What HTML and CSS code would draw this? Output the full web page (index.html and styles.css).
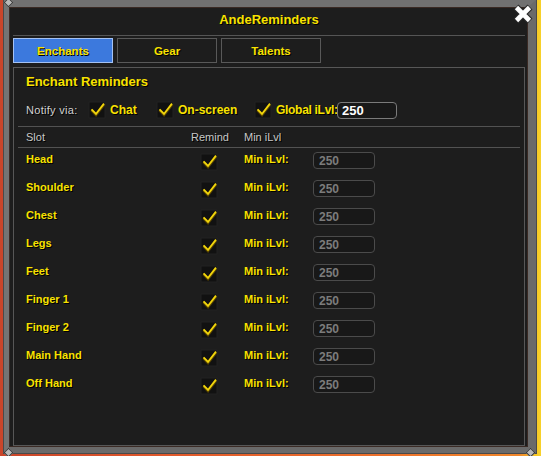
FILE: index.html
```html
<!DOCTYPE html>
<html lang="en">
<head>
    <meta charset="UTF-8" />
    <meta name="viewport" content="width=device-width, initial-scale=1.0"/>
    <title>AndeReminders</title>
    <link rel="stylesheet" href="styles.css">
</head>
<body>
    <svg class="defs" width="0" height="0" aria-hidden="true">
        <symbol id="check" viewBox="0 0 18 18">
            <rect x="1" y="1" width="16" height="16" fill="#111111" stroke="#222222"/>
            <path d="M3.5 9 L8 13.8 L16 3.4" fill="none" stroke="#5a4600" stroke-width="3"/>
            <path d="M3.5 8.4 L8 13 L16 2.6" fill="none" stroke="#f2d60c" stroke-width="1.8"/>
        </symbol>
    </svg>

    <div class="frame">
        <span class="rivet rivet-tl"></span>
        <span class="rivet rivet-bl"></span>
        <span class="rivet rivet-br"></span>

        <div class="title">AndeReminders</div>
        <button class="close" title="Close">
            <svg viewBox="0 0 22 22" width="22" height="22">
                <path d="M4 4 L18 18 M18 4 L4 18" stroke="#2b2b2b" stroke-width="7"/>
                <path d="M4.5 4.5 L17.5 17.5 M17.5 4.5 L4.5 17.5" stroke="#ffffff" stroke-width="4.6"/>
            </svg>
        </button>

        <div class="tabs">
            <button class="tab active">Enchants</button>
            <button class="tab">Gear</button>
            <button class="tab">Talents</button>
        </div>

        <div class="panel">
            <h2>Enchant Reminders</h2>

            <div class="notify">
                <span class="notify-label">Notify via:</span>
                <label class="opt opt-chat"><svg class="cb"><use href="#check"/></svg>Chat</label>
                <label class="opt opt-screen"><svg class="cb"><use href="#check"/></svg>On-screen</label>
                <label class="opt opt-global"><svg class="cb"><use href="#check"/></svg>Global iLvl:</label>
                <input class="ilvl global" type="text" value="250">
            </div>

            <div class="sep"></div>
            <div class="row head">
                <span>Slot</span>
                <span class="mid">Remind</span>
                <span>Min iLvl</span>
            </div>
            <div class="sep"></div>

            <div class="row"><span class="lbl">Head</span><svg class="cb"><use href="#check"/></svg><span class="lbl">Min iLvl:</span><input class="ilvl" type="text" value="250" disabled></div>
            <div class="row"><span class="lbl">Shoulder</span><svg class="cb"><use href="#check"/></svg><span class="lbl">Min iLvl:</span><input class="ilvl" type="text" value="250" disabled></div>
            <div class="row"><span class="lbl">Chest</span><svg class="cb"><use href="#check"/></svg><span class="lbl">Min iLvl:</span><input class="ilvl" type="text" value="250" disabled></div>
            <div class="row"><span class="lbl">Legs</span><svg class="cb"><use href="#check"/></svg><span class="lbl">Min iLvl:</span><input class="ilvl" type="text" value="250" disabled></div>
            <div class="row"><span class="lbl">Feet</span><svg class="cb"><use href="#check"/></svg><span class="lbl">Min iLvl:</span><input class="ilvl" type="text" value="250" disabled></div>
            <div class="row"><span class="lbl">Finger 1</span><svg class="cb"><use href="#check"/></svg><span class="lbl">Min iLvl:</span><input class="ilvl" type="text" value="250" disabled></div>
            <div class="row"><span class="lbl">Finger 2</span><svg class="cb"><use href="#check"/></svg><span class="lbl">Min iLvl:</span><input class="ilvl" type="text" value="250" disabled></div>
            <div class="row"><span class="lbl">Main Hand</span><svg class="cb"><use href="#check"/></svg><span class="lbl">Min iLvl:</span><input class="ilvl" type="text" value="250" disabled></div>
            <div class="row"><span class="lbl">Off Hand</span><svg class="cb"><use href="#check"/></svg><span class="lbl">Min iLvl:</span><input class="ilvl" type="text" value="250" disabled></div>
        </div>
    </div>
</body>
</html>
```

FILE: styles.css
```css
body {
    margin: 0;
    padding: 0;
    width: 541px;
    height: 456px;
    overflow: hidden;
    font-family: "Liberation Sans", Arial, sans-serif;
    background: linear-gradient(to right, #c9452a 0%, #e0582b 30%, #ec702b 70%, #f0862a 96%, #f6c626 99%, #f8d22a 100%);
}

.defs {
    position: absolute;
}

.frame {
    position: relative;
    box-sizing: border-box;
    width: 532px;
    height: 453px;
    margin-left: 4px;
    display: flex;
    flex-direction: column;
    background-color: #1d1d1d;
    border-style: solid;
    border-color: #717171 #6a6a6a #6a6a6a #747474;
    border-width: 7px 8px 6px 5px;
    box-shadow: inset 0 0 0 1px #3a2a24, 0 0 0 1px #4a4a4a;
}

.rivet {
    position: absolute;
    width: 5px;
    height: 5px;
    background: #b9b9b9;
    border: 1px solid #3a3a3a;
    transform: rotate(45deg);
}

.rivet-tl { left: -4px; top: -8px; }
.rivet-bl { left: -4px; bottom: -9px; }
.rivet-br { right: -6px; bottom: -9px; }

.title {
    height: 24px;
    padding: 1px 0 3px;
    margin: 0 3px 0 4px;
    line-height: 24px;
    text-align: center;
    color: #f8e200;
    font-size: 13px;
    font-weight: bold;
    text-shadow: 1px 1px 0 #000;
    border-bottom: 1px solid #555555;
}

.close {
    position: absolute;
    left: 503px;
    top: -4px;
    width: 22px;
    height: 22px;
    padding: 0;
    border: none;
    background: none;
    cursor: pointer;
}

.tabs {
    display: flex;
    gap: 4px;
    margin: 2px 0 0 4px;
}

.tab {
    box-sizing: border-box;
    width: 100px;
    height: 25px;
    padding: 0;
    font-family: "Liberation Sans", Arial, sans-serif;
    font-size: 11.5px;
    font-weight: bold;
    color: #f8e200;
    text-shadow: 1px 1px 0 #000;
    background-color: #1d1d1d;
    border: 1px solid #595959;
    cursor: pointer;
}

.tab.active {
    background-color: #3c79dd;
    border-color: #a5c2f2;
}

.panel {
    flex: 1;
    margin: 4px 3px 1px 4px;
    padding: 0 4px;
    border: 1px solid #575757;
}

h2 {
    margin: 0;
    padding: 6px 8px 0;
    line-height: 16px;
    font-size: 13px;
    font-weight: bold;
    color: #f8e200;
    text-shadow: 1px 1px 0 #000;
}

.notify {
    display: flex;
    align-items: center;
    height: 20px;
    margin-top: 10px;
    padding-left: 8px;
    white-space: nowrap;
}

.notify-label {
    width: 62px;
    font-size: 11px;
    color: #d2d2d2;
    letter-spacing: 0.3px;
    text-shadow: 1px 1px 0 #000;
}

.opt {
    display: flex;
    align-items: center;
    gap: 4px;
    font-size: 12px;
    font-weight: bold;
    color: #f8e200;
    text-shadow: 1px 1px 0 #000;
}

.opt-chat { width: 68px; }
.opt-screen { width: 98px; }

.opt-global {
    width: 83px;
    letter-spacing: -0.3px;
}

.cb {
    width: 18px;
    height: 18px;
    flex: none;
}

.ilvl {
    box-sizing: border-box;
    width: 62px;
    height: 17px;
    padding: 0 0 0 5px;
    font-family: "Liberation Sans", Arial, sans-serif;
    font-size: 12px;
    font-weight: bold;
    color: #7c7c7c;
    background-color: #181818;
    border: 1px solid #4b4b4b;
    border-radius: 4px;
    outline: none;
}

.ilvl.global {
    width: 60px;
    padding-left: 4px;
    font-size: 13px;
    color: #ffffff;
    border-color: #7a7a7a;
}

.sep {
    height: 1px;
    background-color: #525252;
    margin-top: 6px;
}

.head + .sep {
    margin-top: 0;
}

.row {
    display: grid;
    grid-template-columns: 150px 68px 69px 62px;
    align-items: start;
    height: 28px;
    padding-left: 8px;
}

.row.head {
    align-items: center;
    height: 20px;
    font-size: 11px;
    color: #c8c8c8;
    text-shadow: 1px 1px 0 #000;
}

.mid {
    text-align: center;
}

.lbl {
    margin-top: 4px;
    line-height: 14px;
    font-size: 11px;
    font-weight: bold;
    color: #f8e200;
    text-shadow: 1px 1px 0 #000;
    white-space: nowrap;
}

.row .cb {
    justify-self: center;
    margin-top: 5px;
    margin-right: 2px;
}

.row .ilvl {
    margin-top: 4px;
}
```
